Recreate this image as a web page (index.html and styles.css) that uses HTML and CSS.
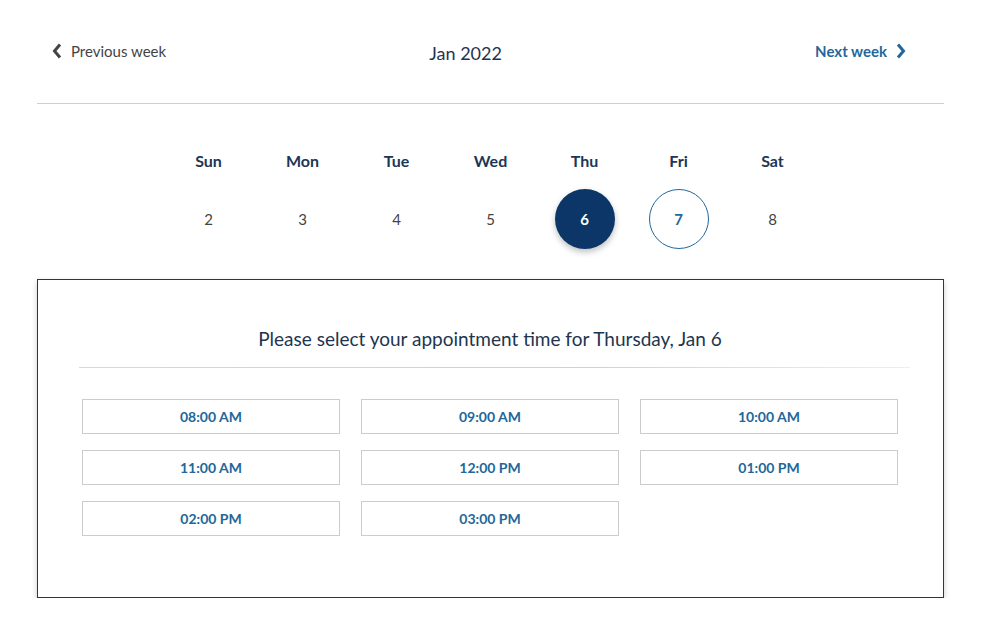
FILE: index.html
```html
<!DOCTYPE html>
<html lang="en">
<head>
  <meta charset="UTF-8" />
  <meta name="viewport" content="width=device-width, initial-scale=1.0" />
  <title>Book Appointment</title>
  <link rel="stylesheet" href="styles.css">
</head>
<body>
  <div class="week-nav">
    <a class="nav-link prev" href="#">
      <svg class="chev" viewBox="0 0 10 16" width="10" height="16"><path d="M8 1.5 L2.5 8 L8 14.5" /></svg>
      Previous week
    </a>
    <div class="month">Jan 2022</div>
    <a class="nav-link next" href="#">
      Next week
      <svg class="chev" viewBox="0 0 10 16" width="10" height="16"><path d="M2 1.5 L7.5 8 L2 14.5" /></svg>
    </a>
  </div>

  <div class="days">
    <div class="day"><div class="day-name">Sun</div><div class="day-num">2</div></div>
    <div class="day"><div class="day-name">Mon</div><div class="day-num">3</div></div>
    <div class="day"><div class="day-name">Tue</div><div class="day-num">4</div></div>
    <div class="day"><div class="day-name">Wed</div><div class="day-num">5</div></div>
    <div class="day"><div class="day-name">Thu</div><div class="day-num selected">6</div></div>
    <div class="day"><div class="day-name">Fri</div><div class="day-num available">7</div></div>
    <div class="day"><div class="day-name">Sat</div><div class="day-num">8</div></div>
  </div>

  <div class="slots-box">
    <h2>Please select your appointment time for Thursday, Jan 6</h2>
    <div class="divider"></div>
    <div class="slots">
      <button class="slot">08:00 AM</button>
      <button class="slot">09:00 AM</button>
      <button class="slot">10:00 AM</button>
      <button class="slot">11:00 AM</button>
      <button class="slot">12:00 PM</button>
      <button class="slot">01:00 PM</button>
      <button class="slot">02:00 PM</button>
      <button class="slot">03:00 PM</button>
    </div>
  </div>
</body>
</html>
```

FILE: styles.css
```css
body {
  font-family: "Source Sans Pro", Lato, "Open Sans", sans-serif;
  margin: 0;
  padding: 0 46px 0 37px;
  background-color: #fff;
  color: #333;
}

.week-nav {
  display: flex;
  align-items: center;
  justify-content: space-between;
  height: 104px;
  padding: 0 38px 0 15px;
  border-bottom: 1px solid #cfcfcf;
  box-sizing: border-box;
}

.nav-link {
  display: flex;
  align-items: center;
  gap: 9px;
  font-size: 15px;
  text-decoration: none;
  margin-top: -1px;
}

.nav-link.prev {
  color: #444;
}

.nav-link.next {
  color: #23679a;
  font-weight: bold;
}

.chev path {
  fill: none;
  stroke: currentColor;
  stroke-width: 3;
}

.month {
  font-size: 18px;
  color: #1f3452;
  margin: 2px 50px 0 0;
}

.days {
  display: flex;
  justify-content: center;
  margin-top: 47px;
}

.day {
  width: 94px;
  display: flex;
  flex-direction: column;
  align-items: center;
}

.day-name {
  font-size: 16px;
  font-weight: bold;
  color: #1d3656;
  height: 22px;
}

.day-num {
  width: 60px;
  height: 60px;
  margin-top: 16px;
  border-radius: 50%;
  display: flex;
  align-items: center;
  justify-content: center;
  font-size: 15px;
  color: #444;
  box-sizing: border-box;
}

.day-num.selected {
  background-color: #0b3667;
  color: #fff;
  font-weight: bold;
  box-shadow: 0 3px 6px rgba(0, 0, 0, 0.25);
}

.day-num.available {
  border: 1px solid #23679a;
  color: #23679a;
  font-weight: bold;
}

.slots-box {
  margin-top: 30px;
  height: 319px;
  border: 1px solid #1b3a5e;
  box-shadow: 0 3px 6px rgba(0, 0, 0, 0.2);
  padding: 0 45px 0 44px;
  box-sizing: border-box;
}

.slots-box h2 {
  font-size: 19px;
  font-weight: normal;
  color: #1e3550;
  text-align: center;
  margin: 47px 0 0;
  line-height: 24px;
}

.divider {
  height: 1px;
  margin: 16px -12px 0 -3px;
  background: linear-gradient(to right, #d8d8d8, #d0d0d0 60%, #eee);
}

.slots {
  display: grid;
  grid-template-columns: repeat(3, 258px);
  column-gap: 21px;
  row-gap: 16px;
  margin-top: 31px;
}

.slot {
  height: 35px;
  background: #fff;
  border: 1px solid #cccccc;
  font-family: inherit;
  font-size: 14px;
  font-weight: bold;
  color: #23679a;
  cursor: pointer;
}
```
